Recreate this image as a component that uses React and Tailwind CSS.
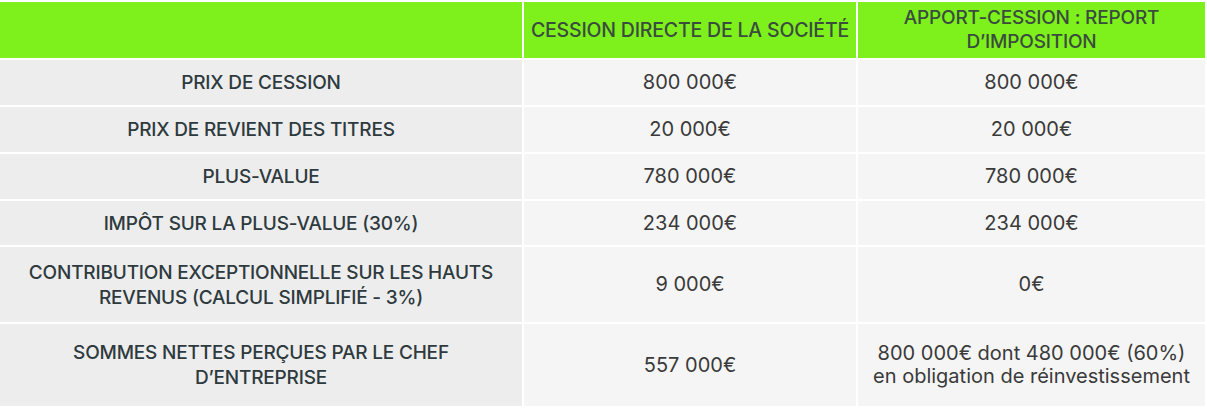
import React from "react";

const rows = [
  { label: ["PRIX DE CESSION"], a: ["800 000€"], b: ["800 000€"], h: "h-[45px]" },
  { label: ["PRIX DE REVIENT DES TITRES"], a: ["20 000€"], b: ["20 000€"], h: "h-[45px]" },
  { label: ["PLUS-VALUE"], a: ["780 000€"], b: ["780 000€"], h: "h-[45px]" },
  { label: ["IMPÔT SUR LA PLUS-VALUE (30%)"], a: ["234 000€"], b: ["234 000€"], h: "h-[44px]" },
  {
    label: ["CONTRIBUTION EXCEPTIONNELLE SUR LES HAUTS", "REVENUS (CALCUL SIMPLIFIÉ - 3%)"],
    a: ["9 000€"],
    b: ["0€"],
    h: "h-[75px]",
  },
  {
    label: ["SOMMES NETTES PERÇUES PAR LE CHEF", "D’ENTREPRISE"],
    a: ["557 000€"],
    b: ["800 000€ dont 480 000€ (60%)", "en obligation de réinvestissement"],
    h: "h-[82px]",
  },
];

function Lines({ lines }) {
  return lines.map((l, i) => <div key={i} className="whitespace-nowrap">{l}</div>);
}

export default function App() {
  return (
    <div className="w-[1207px] h-[409px] bg-white pt-[2px] pr-[2px]" style={{ fontFamily: "Inter, 'Liberation Sans', sans-serif" }}>
      <div className="grid grid-cols-[522px_332px_1fr] gap-[2px]">
        <div className="h-[56px] bg-[#7ef01c]" />
        <div className="h-[56px] bg-[#7ef01c] flex items-center justify-center text-center text-[19.5px] leading-[24px] font-medium tracking-[-0.01em] text-[#3a4c3e] whitespace-nowrap">
          CESSION DIRECTE DE LA SOCIÉTÉ
        </div>
        <div className="h-[56px] bg-[#7ef01c] flex flex-col items-center justify-center text-center text-[19px] leading-[24px] font-medium tracking-[-0.01em] text-[#3a4c3e]">
          <div>APPORT-CESSION : REPORT</div>
          <div>D’IMPOSITION</div>
        </div>
        {rows.map((r, i) => (
          <React.Fragment key={i}>
            <div className={`${r.h} bg-[#ededee] flex flex-col items-center justify-center text-center text-[19px] leading-[25px] font-medium tracking-[-0.01em] text-[#2e3a3d]`}>
              <Lines lines={r.label} />
            </div>
            <div className={`${r.h} bg-[#f5f5f5] flex flex-col items-center justify-center text-center text-[20px] leading-[23px] text-[#3a3a3a]`}>
              <Lines lines={r.a} />
            </div>
            <div className={`${r.h} bg-[#f5f5f5] flex flex-col items-center justify-center text-center text-[20px] leading-[23px] text-[#3a3a3a]`}>
              <Lines lines={r.b} />
            </div>
          </React.Fragment>
        ))}
      </div>
    </div>
  );
}
